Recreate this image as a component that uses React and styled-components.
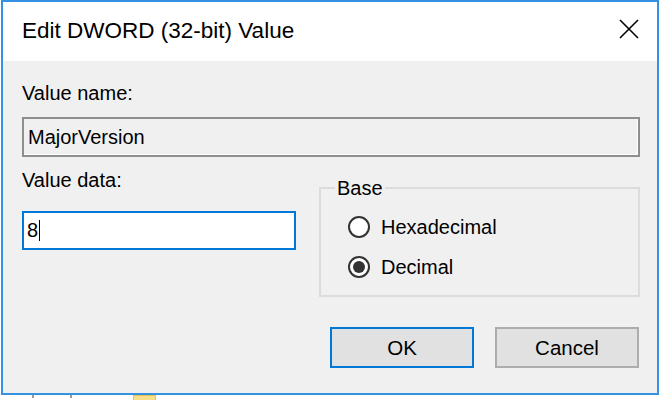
import React from 'react'
import styled, { createGlobalStyle } from 'styled-components'

const GlobalStyle = createGlobalStyle`
  html, body {
    margin: 0;
    padding: 0;
    background: #ffffff;
  }
  body {
    font-family: "Liberation Sans", Arial, sans-serif;
    color: #000;
  }
`

const Page = styled.div`
  width: 664px;
  height: 400px;
  overflow: hidden;
  background: #ffffff;
`

const Dialog = styled.div`
  width: 658px;
  margin-left: 1px;
  border: 2px solid #3592e3;
  box-sizing: border-box;
  background: #f0f0f0;
  display: flex;
  flex-direction: column;
`

const TitleBar = styled.div`
  height: 59px;
  background: #ffffff;
  display: flex;
  align-items: center;
  justify-content: space-between;
  padding: 0 18px 0 19px;
`

const Title = styled.div`
  font-size: 22.5px;
  line-height: 27px;
  margin-top: -2px;
`

const CloseButton = styled.div`
  width: 20px;
  height: 20px;
  align-self: flex-start;
  margin-top: 17px;
  display: flex;
`

const Body = styled.div`
  padding: 20px 17px 25px 19px;
  display: flex;
  flex-direction: column;
`

const Label = styled.div`
  font-size: 20px;
  line-height: 24px;
`

const ReadOnlyBox = styled.div`
  margin-top: 12px;
  height: 40px;
  box-sizing: border-box;
  border: 2px solid #8e8e8e;
  box-shadow: inset -1px -1px 0 #ffffff;
  background: #f0f0f0;
  display: flex;
  align-items: center;
  padding-left: 4px;
  font-size: 20px;
`

const DataRow = styled.div`
  margin-top: 11px;
  display: flex;
  align-items: flex-start;
  gap: 23px;
`

const DataColumn = styled.div`
  width: 274px;
  display: flex;
  flex-direction: column;
`

const TextInput = styled.div`
  margin-top: 19px;
  height: 39px;
  box-sizing: border-box;
  border: 2px solid #0078d7;
  background: #ffffff;
  display: flex;
  align-items: center;
  padding-left: 3px;
  font-size: 20px;
`

const Caret = styled.span`
  display: inline-block;
  width: 1px;
  height: 21px;
  background: #000;
  margin-left: 1px;
`

const GroupBox = styled.fieldset`
  margin: 8px 0 0 0;
  padding: 0;
  width: 321px;
  box-sizing: border-box;
  border: 2px solid #dcdcdc;
  min-width: 0;
`

const Legend = styled.legend`
  margin-left: 14px;
  padding: 0 2px;
  font-size: 20px;
  line-height: 24px;
`

const RadioList = styled.div`
  padding: 12px 0 13px 27px;
  display: flex;
  flex-direction: column;
  gap: 10px;
`

const RadioRow = styled.div`
  height: 30px;
  display: flex;
  align-items: center;
  gap: 11px;
  font-size: 20px;
`

const RadioCircle = styled.span`
  width: 22px;
  height: 22px;
  box-sizing: border-box;
  border-radius: 50%;
  border: 2px solid #333333;
  background: #ffffff;
  display: flex;
  align-items: center;
  justify-content: center;

  &::after {
    content: '';
    width: 12px;
    height: 12px;
    border-radius: 50%;
    background: ${p => (p.$checked ? '#333333' : 'transparent')};
  }
`

const ButtonRow = styled.div`
  margin-top: 30px;
  display: flex;
  justify-content: flex-end;
  gap: 21px;
  padding-right: 1px;
`

const Button = styled.div`
  width: 144px;
  height: 41px;
  box-sizing: border-box;
  border: 2px solid ${p => (p.$default ? '#0078d7' : '#adadad')};
  background: #e1e1e1;
  display: flex;
  align-items: center;
  justify-content: center;
  font-size: 20.5px;
`

const Backdrop = styled.div`
  height: 5px;
  display: flex;
  align-items: flex-start;
  padding-left: 32px;
`

const Tick = styled.span`
  width: 2px;
  height: 3px;
  background: #9a9a9a;
  margin-right: ${p => p.$gap}px;
`

const Folder = styled.span`
  width: 23px;
  height: 5px;
  box-sizing: border-box;
  border: 1px solid #e6c257;
  border-bottom: none;
  background: #f8df8c;
`

function CloseIcon() {
  return (
    <svg width="20" height="20" viewBox="0 0 20 20">
      <path d="M1 1 L19 19 M19 1 L1 19" stroke="#000" strokeWidth="1.6" fill="none" />
    </svg>
  )
}

function Radio({ label, checked }) {
  return (
    <RadioRow>
      <RadioCircle $checked={checked} />
      <span>{label}</span>
    </RadioRow>
  )
}

export default function App() {
  return (
    <Page>
      <GlobalStyle />
      <Dialog>
        <TitleBar>
          <Title>Edit DWORD (32-bit) Value</Title>
          <CloseButton>
            <CloseIcon />
          </CloseButton>
        </TitleBar>
        <Body>
          <Label>Value name:</Label>
          <ReadOnlyBox>MajorVersion</ReadOnlyBox>
          <DataRow>
            <DataColumn>
              <Label>Value data:</Label>
              <TextInput>
                8<Caret />
              </TextInput>
            </DataColumn>
            <GroupBox>
              <Legend>Base</Legend>
              <RadioList>
                <Radio label="Hexadecimal" />
                <Radio label="Decimal" checked />
              </RadioList>
            </GroupBox>
          </DataRow>
          <ButtonRow>
            <Button $default>OK</Button>
            <Button>Cancel</Button>
          </ButtonRow>
        </Body>
      </Dialog>
      <Backdrop>
        <Tick $gap={36} />
        <Tick $gap={61} />
        <Folder />
      </Backdrop>
    </Page>
  )
}
